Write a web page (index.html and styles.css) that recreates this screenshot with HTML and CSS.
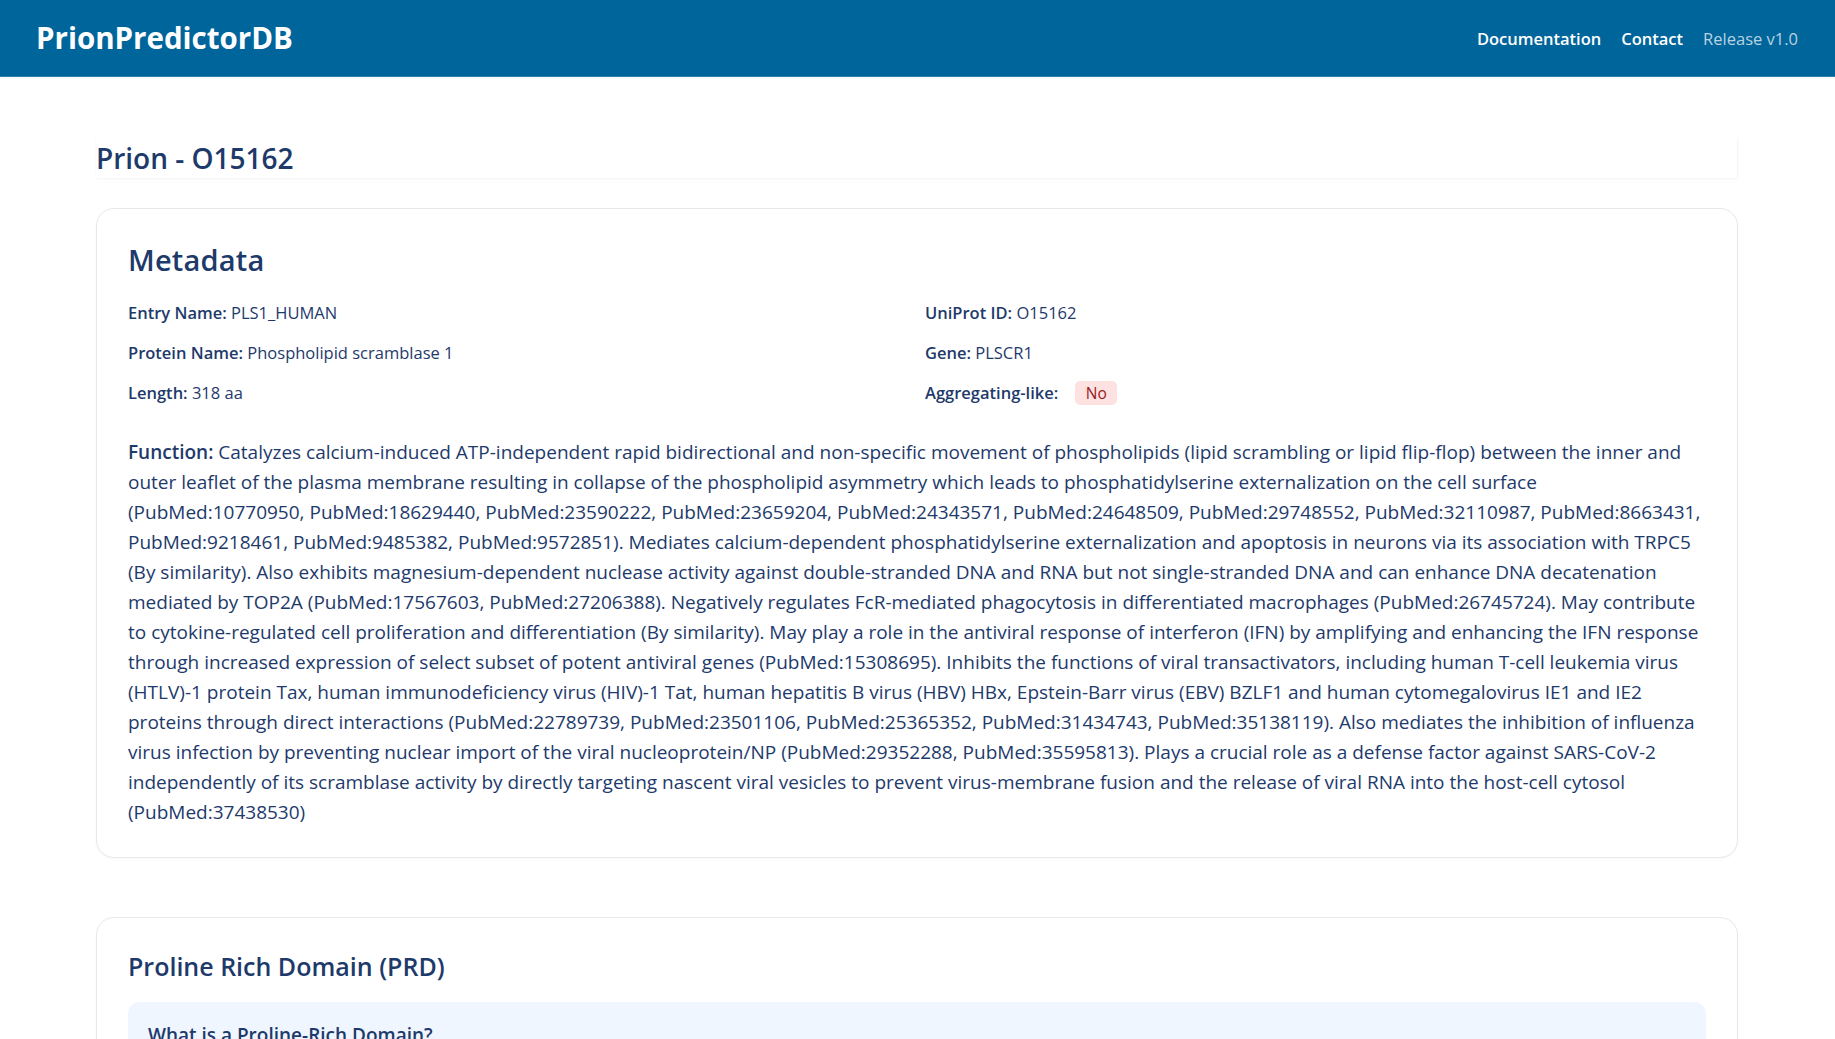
FILE: index.html
```html
<!DOCTYPE html>
<html lang="en">
<head>
<meta charset="utf-8">
<title>PrionPredictorDB - O15162</title>
<link rel="stylesheet" href="styles.css">
</head>
<body>
<header class="topbar">
  <a class="brand" href="#">PrionPredictorDB</a>
  <nav class="nav">
    <a class="nav-link" href="#">Documentation</a>
    <a class="nav-link" href="#">Contact</a>
    <span class="nav-release">Release v1.0</span>
  </nav>
</header>

<main class="page">
  <div class="title-box">
    <h1 class="page-title">Prion - O15162</h1>
  </div>

  <section class="card">
    <h2 class="card-title">Metadata</h2>
    <div class="meta-grid">
      <div class="meta-item"><span class="label">Entry Name:</span> PLS1_HUMAN</div>
      <div class="meta-item"><span class="label">UniProt ID:</span> O15162</div>
      <div class="meta-item"><span class="label">Protein Name:</span> Phospholipid scramblase 1</div>
      <div class="meta-item"><span class="label">Gene:</span> PLSCR1</div>
      <div class="meta-item"><span class="label">Length:</span> 318 aa</div>
      <div class="meta-item"><span class="label">Aggregating-like:</span><span class="badge badge-no">No</span></div>
    </div>
    <p class="function"><span class="label">Function:</span> Catalyzes calcium-induced ATP-independent rapid bidirectional and non-specific movement of phospholipids (lipid scrambling or lipid flip-flop) between the inner and<br>outer leaflet of the plasma membrane resulting in collapse of the phospholipid asymmetry which leads to phosphatidylserine externalization on the cell surface<br>(PubMed:10770950, PubMed:18629440, PubMed:23590222, PubMed:23659204, PubMed:24343571, PubMed:24648509, PubMed:29748552, PubMed:32110987, PubMed:8663431,<br>PubMed:9218461, PubMed:9485382, PubMed:9572851). Mediates calcium-dependent phosphatidylserine externalization and apoptosis in neurons via its association with TRPC5<br>(By similarity). Also exhibits magnesium-dependent nuclease activity against double-stranded DNA and RNA but not single-stranded DNA and can enhance DNA decatenation<br>mediated by TOP2A (PubMed:17567603, PubMed:27206388). Negatively regulates FcR-mediated phagocytosis in differentiated macrophages (PubMed:26745724). May contribute<br>to cytokine-regulated cell proliferation and differentiation (By similarity). May play a role in the antiviral response of interferon (IFN) by amplifying and enhancing the IFN response<br>through increased expression of select subset of potent antiviral genes (PubMed:15308695). Inhibits the functions of viral transactivators, including human T-cell leukemia virus<br>(HTLV)-1 protein Tax, human immunodeficiency virus (HIV)-1 Tat, human hepatitis B virus (HBV) HBx, Epstein-Barr virus (EBV) BZLF1 and human cytomegalovirus IE1 and IE2<br>proteins through direct interactions (PubMed:22789739, PubMed:23501106, PubMed:25365352, PubMed:31434743, PubMed:35138119). Also mediates the inhibition of influenza<br>virus infection by preventing nuclear import of the viral nucleoprotein/NP (PubMed:29352288, PubMed:35595813). Plays a crucial role as a defense factor against SARS-CoV-2<br>independently of its scramblase activity by directly targeting nascent viral vesicles to prevent virus-membrane fusion and the release of viral RNA into the host-cell cytosol<br>(PubMed:37438530)</p>
  </section>

  <section class="card card-prd">
    <h2 class="section-title">Proline Rich Domain (PRD)</h2>
    <div class="info-box">
      <h3 class="info-title">What is a Proline-Rich Domain?</h3>
      <p class="info-text">Proline-rich domains are protein regions with a high proportion of proline residues.</p>
    </div>
  </section>
</main>
</body>
</html>
```
FILE: styles.css
```css
* { box-sizing: border-box; }

html, body {
  margin: 0;
  padding: 0;
  background: #ffffff;
}

body {
  font-family: "Open Sans", "Noto Sans", sans-serif;
  color: #1e3a6b;
}

a { text-decoration: none; }

/* ---------- Top bar ---------- */
.topbar {
  height: 77px;
  background: #00659b;
  border-bottom: 1px solid #2d7fae;
  display: flex;
  align-items: center;
  justify-content: space-between;
  padding: 0 37px 0 36px;
}

.brand {
  color: #ffffff;
  font-size: 29.5px;
  font-weight: 700;
  line-height: 1;
}

.nav {
  display: flex;
  align-items: center;
  gap: 20px;
  font-size: 16.5px;
  margin-top: 1px;
}

.nav-link {
  color: #ffffff;
  font-weight: 600;
}

.nav-release {
  color: rgba(255, 255, 255, 0.72);
  font-weight: 400;
}

/* ---------- Page ---------- */
.page {
  padding: 62px 97px 40px 96px;
}

.title-box {
  background: #ffffff;
  box-shadow: 0 1px 2px rgba(0, 0, 0, 0.05);
  border-right: 1px solid #f6f6f6;
}

.page-title {
  margin: 0;
  font-size: 28px;
  font-weight: 600;
  line-height: 39px;
  color: #1e3a6b;
}

.card {
  margin-top: 30px;
  background: #ffffff;
  border: 1px solid #e6e8ec;
  border-radius: 18px;
  box-shadow: 0 1px 3px rgba(0, 0, 0, 0.03);
  padding: 31px 31px 30px 31px;
}

.card-title {
  margin: 0 0 21px;
  font-size: 29px;
  font-weight: 600;
  line-height: 40px;
  letter-spacing: 0.2px;
}

.meta-grid {
  display: grid;
  grid-template-columns: 1fr 1fr;
  column-gap: 16px;
  row-gap: 16px;
}

.meta-item {
  font-size: 16.5px;
  line-height: 24px;
  display: flex;
  align-items: center;
  white-space: pre;
}

.label {
  font-weight: 600;
}

.badge {
  display: inline-block;
  margin-left: 17px;
  padding: 0 10.5px;
  height: 24px;
  line-height: 24px;
  border-radius: 5px;
  font-size: 15.5px;
  font-weight: 500;
}

.badge-no {
  background: #fee2e2;
  color: #991b1b;
}

.function {
  margin: 32px 0 0;
  font-size: 19px;
  line-height: 30px;
  white-space: nowrap;
}

/* ---------- PRD ---------- */
.card-prd {
  margin-top: 59px;
}

.section-title {
  margin: 0 0 18px;
  font-size: 25px;
  font-weight: 600;
  line-height: 35px;
}

.info-box {
  background: #eff6ff;
  border-radius: 12px;
  padding: 20px;
}

.info-title {
  margin: 0 0 10px;
  font-size: 19px;
  font-weight: 600;
  line-height: 27px;
}

.info-text {
  margin: 0;
  font-size: 17px;
  line-height: 27px;
}
```
